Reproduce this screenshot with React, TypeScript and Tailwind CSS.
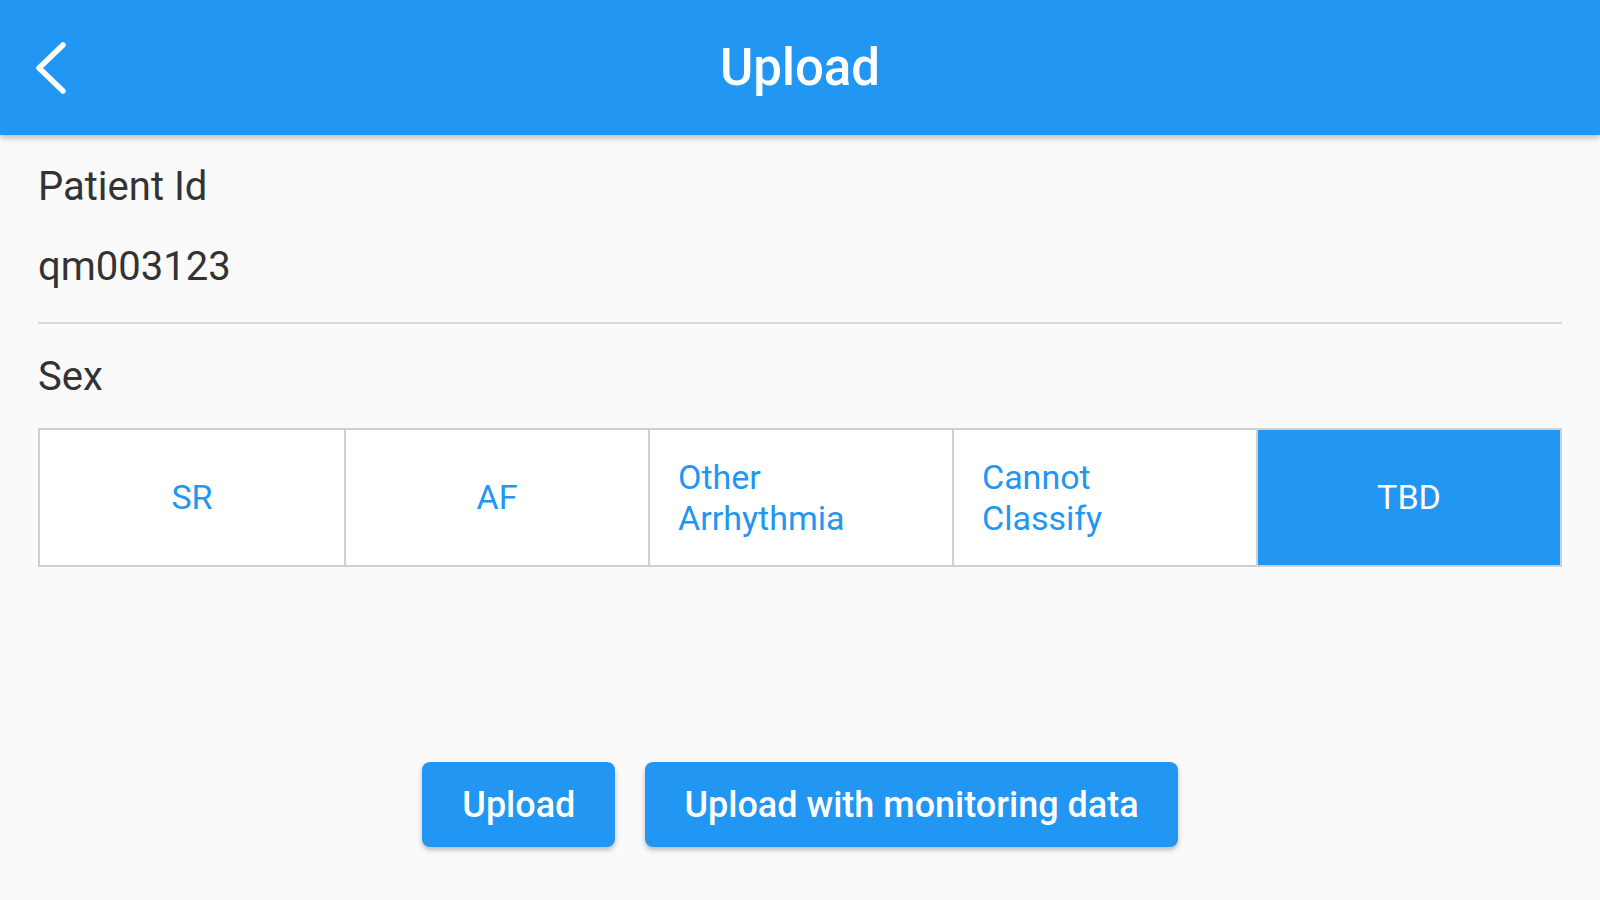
import React from 'react';

const options = [
  { key: 'sr', lines: ['SR'] },
  { key: 'af', lines: ['AF'] },
  { key: 'other', lines: ['Other', 'Arrhythmia'] },
  { key: 'cannot', lines: ['Cannot', 'Classify'] },
  { key: 'tbd', lines: ['TBD'] },
];

function BackIcon() {
  return (
    <svg width="44" height="60" viewBox="0 0 44 60" fill="none">
      <polyline
        points="33,7 9,30 33,53"
        stroke="white"
        strokeWidth="5.5"
        strokeLinecap="round"
        strokeLinejoin="round"
      />
    </svg>
  );
}

export default function App() {
  const selected = 'tbd';

  return (
    <div
      className="w-full h-[900px] bg-[#fafafa] flex flex-col overflow-hidden"
      style={{ fontFamily: 'Roboto, "Noto Sans", sans-serif' }}
    >
      <header className="h-[135px] shrink-0 bg-[#2196f3] shadow-[0_3px_6px_rgba(0,0,0,0.25)] grid grid-cols-[1fr_auto_1fr] items-center">
        <div className="pl-[30px] flex items-center">
          <BackIcon />
        </div>
        <h1 className="text-white text-[51px] leading-none font-medium">Upload</h1>
        <div />
      </header>

      <main className="px-[38px] flex flex-col">
        <div className="mt-[30px] text-[40px] leading-[44px] text-[#333333]">Patient Id</div>
        <div className="mt-[36px] text-[40px] leading-[44px] text-[#333333]">qm003123</div>
        <div className="mt-[33px] h-[2px] bg-[#d9d9d9]" />
        <div className="mt-[31px] text-[40px] leading-[44px] text-[#333333]">Sex</div>

        <div className="mt-[29px] h-[139px] grid grid-cols-5 border-2 border-[#d0d0d0] bg-white">
          {options.map((o, i) => {
            const active = o.key === selected;
            const multi = o.lines.length > 1;
            return (
              <div
                key={o.key}
                className={
                  (i > 0 ? 'border-l-2 border-[#d0d0d0] ' : '') +
                  (active ? 'bg-[#2196f3] text-white ' : 'bg-white text-[#2196f3] ') +
                  'flex flex-col justify-center px-[28px] text-[34px] leading-[41px] ' +
                  (multi ? 'items-start' : 'items-center')
                }
              >
                {o.lines.map((l) => (
                  <span key={l}>{l}</span>
                ))}
              </div>
            );
          })}
        </div>

        <div className="mt-[195px] flex justify-center gap-[30px]">
          <button className="h-[85px] px-[40px] rounded-[8px] bg-[#2196f3] text-white text-[36px] font-medium shadow-[0_3px_5px_rgba(0,0,0,0.25)]">
            Upload
          </button>
          <button className="h-[85px] px-[39px] rounded-[8px] bg-[#2196f3] text-white text-[36px] font-medium shadow-[0_3px_5px_rgba(0,0,0,0.25)]">
            Upload with monitoring data
          </button>
        </div>
      </main>
    </div>
  );
}
